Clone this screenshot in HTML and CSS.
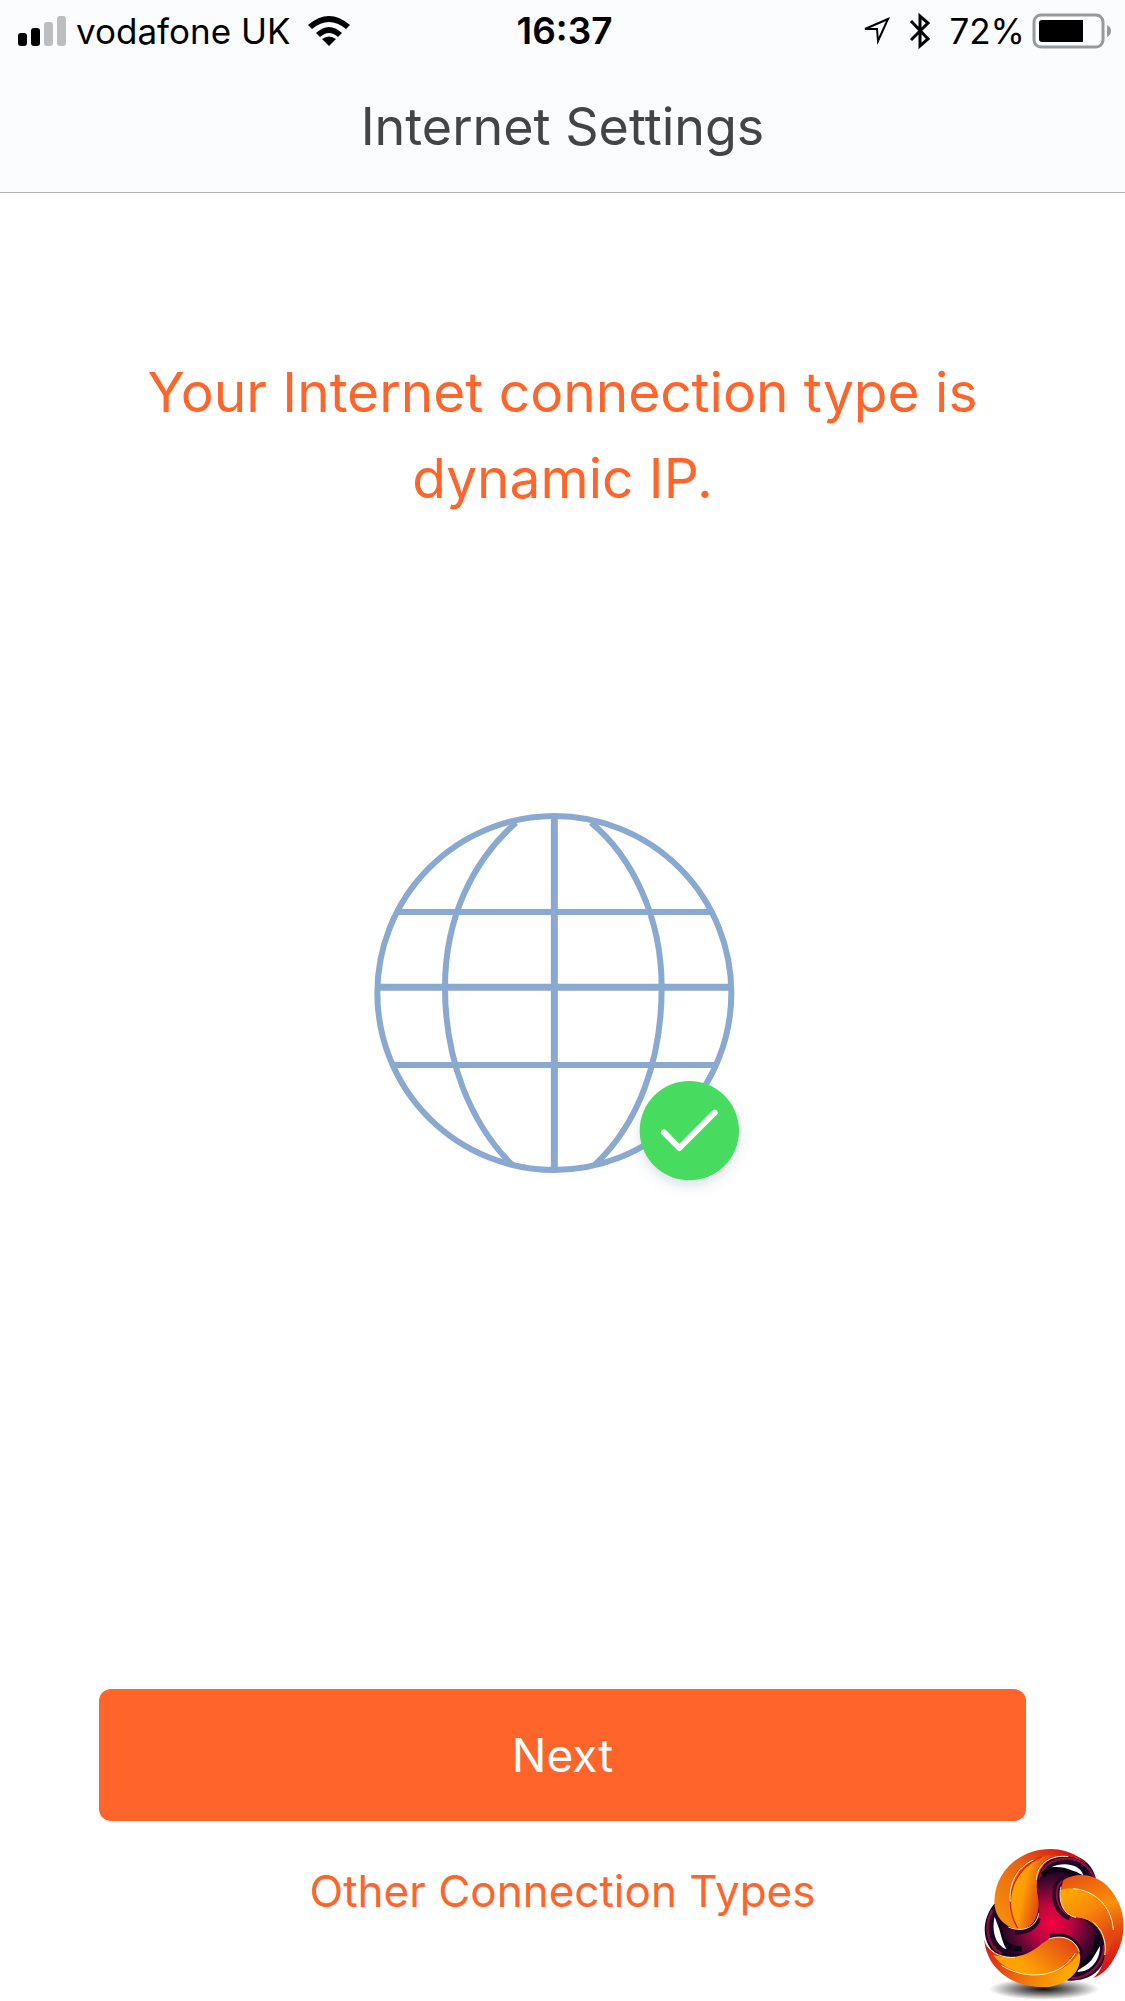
FILE: index.html
```html
<!DOCTYPE html>
<html lang="en">
<head>
  <meta charset="utf-8">
  <meta name="viewport" content="width=device-width, initial-scale=1">
  <title>Internet Settings</title>
  <link rel="stylesheet" href="styles.css">
</head>
<body>
  <header class="header">
    <div class="status">
      <div class="status-left">
        <svg class="signal" viewBox="0 0 48 30" role="img" aria-label="Signal: 2 of 4 bars">
          <rect x="0" y="17" width="9" height="13" rx="3"/>
          <rect x="13" y="12" width="9" height="18" rx="3"/>
          <rect class="bar-off" x="26" y="6" width="9" height="24" rx="3"/>
          <rect class="bar-off" x="39" y="0" width="9" height="30" rx="3"/>
        </svg>
        <span class="carrier">vodafone UK</span>
        <svg class="wifi" viewBox="0 0 42 30" role="img" aria-label="Wi-Fi">
          <path d="M0 9Q21 -9 42 9L38 13Q21 -1 4 13Z"/>
          <path d="M8 17Q21 5 34 17L30 21Q21 13 12 21Z"/>
          <path d="M14 23Q21 18 28 23L21 30Z"/>
        </svg>
      </div>
      <time class="clock">16:37</time>
      <div class="status-right">
        <svg class="location" viewBox="0 0 30 30" role="img" aria-label="Location">
          <path d="M27 3L4 13H16L17 25Z" fill="none" stroke="#000" stroke-width="2"/>
        </svg>
        <svg class="bluetooth" viewBox="0 0 22 38" role="img" aria-label="Bluetooth">
          <path d="M2 9L19 27L11 34V4L19 11L2 28" fill="none" stroke="#000" stroke-width="3"/>
        </svg>
        <span class="percent">72%</span>
        <svg class="battery" viewBox="0 0 78 34" role="img" aria-label="Battery">
          <rect x="1" y="1" width="69" height="32" rx="7" fill="none" stroke="#98999b" stroke-width="3"/>
          <path d="M9 6H50V28H9Q6 28 6 25V9Q6 6 9 6Z"/>
          <path d="M74 11Q78 13 78 17T74 23Z" fill="#98999b"/>
        </svg>
      </div>
    </div>
    <h1 class="title">Internet Settings</h1>
  </header>

  <main class="main">
    <p class="message">Your Internet connection type is dynamic IP.</p>

    <svg class="globe" viewBox="8 0 1200 1200" role="img" aria-label="Connected">
      <defs>
        <filter id="badge-shadow" x="-30%" y="-30%" width="160%" height="170%">
          <feDropShadow dx="0" dy="18" stdDeviation="18" flood-color="#5a7390" flood-opacity=".2"/>
        </filter>
      </defs>
      <g fill="none" stroke="#8aa9d0" stroke-width="18">
        <circle cx="582" cy="579" r="531"/>
        <path d="M582 48V1110M52 562H1112" stroke-width="21"/>
        <path d="M112 336H1052M98 795H1068"/>
        <path d="M467 68C340 180 254 350 254 562C254 780 330 970 455 1094"/>
        <path d="M692 68C815 170 904 350 904 562C904 780 835 970 704 1094"/>
      </g>
      <circle cx="987" cy="992" r="149" fill="#47dc5f" filter="url(#badge-shadow)"/>
      <path d="M911 997L957 1044L1063 938" fill="none" stroke="#fff" stroke-width="18" stroke-linecap="round" stroke-linejoin="round"/>
    </svg>

    <div class="actions">
      <button class="next" type="button">Next</button>
      <a class="other" href="#">Other Connection Types</a>
    </div>
  </main>

  <svg class="logo" viewBox="0 0 495 513" aria-hidden="true">
    <defs>
      <radialGradient id="floor">
        <stop offset="0" stop-color="#000" stop-opacity=".95"/>
        <stop offset=".5" stop-color="#000" stop-opacity=".5"/>
        <stop offset="1" stop-color="#000" stop-opacity="0"/>
      </radialGradient>
      <radialGradient id="core" gradientUnits="userSpaceOnUse" cx="275" cy="280" r="165">
        <stop offset="0" stop-color="#f5023f"/>
        <stop offset=".35" stop-color="#bd0540"/>
        <stop offset=".7" stop-color="#560733"/>
        <stop offset="1" stop-color="#12031f"/>
      </radialGradient>
      <linearGradient id="blob-a" gradientUnits="userSpaceOnUse" x1="110" y1="240" x2="330" y2="70">
        <stop offset="0" stop-color="#f58a0c"/>
        <stop offset=".5" stop-color="#ea6310"/>
        <stop offset="1" stop-color="#d8141a"/>
      </linearGradient>
      <linearGradient id="blob-a2" gradientUnits="userSpaceOnUse" x1="150" y1="190" x2="245" y2="210">
        <stop offset="0" stop-color="#ffa600"/>
        <stop offset=".4" stop-color="#fd9c03"/>
        <stop offset="1" stop-color="#df3e12"/>
      </linearGradient>
      <linearGradient id="blob-b" gradientUnits="userSpaceOnUse" x1="350" y1="140" x2="460" y2="400">
        <stop offset="0" stop-color="#e9560f"/>
        <stop offset=".4" stop-color="#f9910a"/>
        <stop offset=".7" stop-color="#e54a12"/>
        <stop offset="1" stop-color="#d8141a"/>
      </linearGradient>
      <linearGradient id="blob-b2" gradientUnits="userSpaceOnUse" x1="330" y1="180" x2="440" y2="320">
        <stop offset="0" stop-color="#ffa600"/>
        <stop offset=".5" stop-color="#f8860a"/>
        <stop offset="1" stop-color="#e34812"/>
      </linearGradient>
      <linearGradient id="blob-c" gradientUnits="userSpaceOnUse" x1="80" y1="350" x2="300" y2="460">
        <stop offset="0" stop-color="#d8201a"/>
        <stop offset=".5" stop-color="#ee6a0f"/>
        <stop offset="1" stop-color="#ffa600"/>
      </linearGradient>
      <linearGradient id="blob-c2" gradientUnits="userSpaceOnUse" x1="310" y1="325" x2="215" y2="430">
        <stop offset="0" stop-color="#e34d12"/>
        <stop offset="1" stop-color="#ffa203"/>
      </linearGradient>
    </defs>
    <ellipse cx="252" cy="477" rx="165" ry="32" fill="url(#floor)"/>

    <path d="M230 180C222 110 270 68 335 75C375 82 402 115 408 147L470 240L440 370C430 420 390 455 325 452L200 400L120 380C65 350 60 275 102 222Z" fill="#1a0524"/>
    <g fill="none" stroke="#8c0e3b" stroke-width="7">
      <path d="M238 150C245 95 300 80 340 88C372 96 392 118 402 142"/>
      <path d="M97 240C72 285 78 345 125 372"/>
      <path d="M432 345C433 395 395 444 335 445"/>
    </g>
    <path d="M228 170C245 110 300 108 352 132L318 150C285 175 290 235 330 255C385 262 418 300 416 350C405 390 380 405 358 412L345 350C320 318 270 315 245 342C215 375 170 382 138 358C120 330 114 305 116 285L180 305C225 300 247 255 232 200Z" fill="url(#core)"/>
    <path d="M248 135C270 112 315 112 348 130M120 300C122 330 138 358 185 357M412 315C416 350 395 388 362 408" fill="none" stroke="#0b0213" stroke-width="16"/>
    <path d="M312 147C274 170 281 242 330 260" fill="none" stroke="#250525" stroke-width="22"/>
    <path d="M307 152C278 178 287 235 325 254" fill="none" stroke="#9c1038" stroke-width="5"/>
    <path d="M235 265C225 296 197 307 165 306M270 320C315 307 353 333 364 375" fill="none" stroke="#250525" stroke-width="15"/>
    <g fill="#fff">
      <path d="M274 112C305 96 360 100 370 136C355 128 348 124 338 122C315 112 295 110 274 112Z"/>
      <path d="M104 260C94 305 107 345 140 358C124 332 122 305 115 290Z"/>
      <path d="M420 348C420 390 395 425 352 426C355 415 385 408 400 382Z"/>
    </g>

    <path d="M103 215C105 115 190 55 275 57C330 58 365 85 382 105C350 77 300 70 262 92C225 116 225 160 232 195C245 250 220 300 175 298C130 290 104 260 103 215Z" fill="url(#blob-a)"/>
    <path d="M174 296C135 230 140 130 245 80C266 74 287 75 300 78C235 92 225 150 232 195C245 250 220 300 174 296Z" fill="url(#blob-a2)"/>
    <path d="M174 296C135 230 140 130 245 80" fill="none" stroke="#c92a12" stroke-width="4"/>
    <path d="M151 215C145 165 170 112 220 90M145 291C190 310 230 290 236 250M229 150C231 100 275 73 325 80" fill="none" stroke="#ffedb0" stroke-width="3"/>

    <path d="M310 150C360 120 425 135 460 190C505 255 495 330 465 380C450 410 430 432 400 444C432 415 441 370 430 330C420 290 390 265 350 262C310 255 295 215 303 180Q305 165 310 150Z" fill="url(#blob-b)"/>
    <path d="M303 180C350 165 420 190 450 250C469 290 465 330 440 375C438 320 415 268 350 262C310 255 297 215 303 180Z" fill="url(#blob-b2)"/>
    <path d="M340 176C400 180 455 225 460 300M303 170C293 215 310 255 348 262M398 275C425 295 442 335 434 375" fill="none" stroke="#ffedb0" stroke-width="3"/>

    <path d="M73 330C85 370 125 385 165 382C200 380 225 360 245 342C290 305 350 320 360 375C365 420 330 460 270 470C165 480 80 420 73 330Z" fill="url(#blob-c)"/>
    <path d="M100 375C160 390 205 377 245 342C290 305 345 320 358 365C335 410 280 438 215 434C165 430 125 410 100 375Z" fill="url(#blob-c2)"/>
    <path d="M125 407C205 455 305 440 346 370M77 340C96 373 130 384 165 382M265 328C305 312 345 326 358 365" fill="none" stroke="#ffedb0" stroke-width="3"/>
  </svg>
</body>
</html>
```
FILE: styles.css
```css
* {
  box-sizing: border-box;
}

body {
  position: relative;
  display: flex;
  flex-direction: column;
  min-height: 100vh;
  margin: 0;
  background: #fff;
  color: #000;
  font-family: Inter, "Liberation Sans", sans-serif;
}

.header {
  padding-bottom: 32px;
  border-bottom: 1px solid #b2b2b2;
  background: #fbfcfe;
}

.status {
  display: grid;
  grid-template-columns: 1fr auto 1fr;
  align-items: center;
  height: 62px;
  padding: 0 14px 0 18px;
  font-size: 35px;
  line-height: 42px;
}

.status-left,
.status-right {
  display: flex;
  align-items: center;
}

.status-right {
  justify-content: flex-end;
}

.signal {
  width: 48px;
  height: 30px;
  margin-right: 10px;
}

.bar-off {
  fill: #bdbec0;
}

.wifi {
  width: 42px;
  height: 30px;
  margin-left: 18px;
}

.clock {
  font-size: 37px;
  font-weight: 600;
}

.location {
  width: 30px;
  height: 30px;
  margin-right: 18px;
}

.bluetooth {
  width: 22px;
  height: 38px;
  margin-right: 18px;
}

.battery {
  width: 78px;
  height: 34px;
  margin-left: 8px;
  overflow: visible;
}

.title {
  margin: 32px 0 0;
  color: #444;
  font-size: 52px;
  font-weight: 400;
  line-height: 66px;
  text-align: center;
}

.main {
  display: flex;
  flex: 1;
  flex-direction: column;
  align-items: center;
  padding: 156px 99px 82px;
}

.message {
  max-width: 860px;
  margin: 0;
  color: #ff652b;
  font-size: 55px;
  line-height: 86px;
  text-align: center;
}

.globe {
  width: 400px;
  height: 400px;
  margin: 279px 0 80px;
}

.actions {
  display: flex;
  flex-direction: column;
  align-items: center;
  gap: 42px;
  width: 100%;
  margin-top: auto;
}

.next {
  width: 100%;
  height: 132px;
  border: 0;
  border-radius: 12px;
  background: #ff652b;
  color: #fff;
  font: inherit;
  font-size: 46px;
}

.other {
  color: #ff652b;
  font-size: 44px;
  line-height: 56px;
  text-decoration: none;
}

.logo {
  position: absolute;
  right: 0;
  bottom: 0;
  width: 165px;
  height: 171px;
}
```
